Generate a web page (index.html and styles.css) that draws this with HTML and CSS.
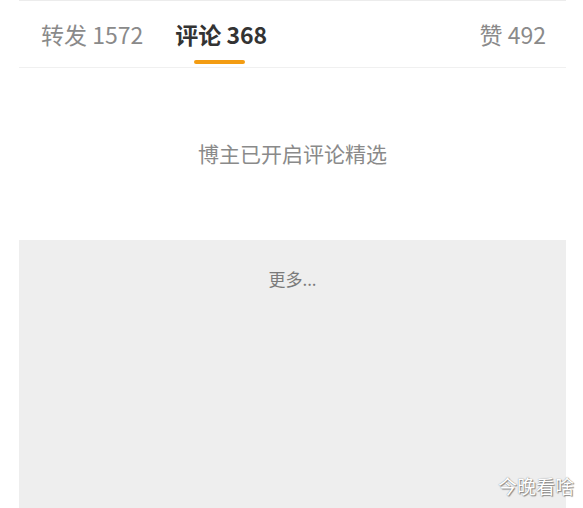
FILE: index.html
```html
<!DOCTYPE html>
<html>
<head>
  <link rel="stylesheet" href="styles.css">
</head>
<body>
  <div class="page">
    <div class="top-line"></div>
    <div class="tabs">
      <div class="tab">转发 1572</div>
      <div class="tab active">评论 368</div>
      <div class="tab like">赞 492</div>
    </div>
    <div class="notice">博主已开启评论精选</div>
    <div class="more-box">
      <div class="more">更多...</div>
    </div>
  </div>
  <div class="watermark">今晚看啥</div>
</body>
</html>
```

FILE: styles.css
```css
body {
  margin: 0;
  width: 583px;
  height: 508px;
  overflow: hidden;
  background: #fff;
  font-family: "Noto Sans CJK SC", "Noto Sans", sans-serif;
  position: relative;
}
.page {
  padding: 0 17px 0 19px;
}
.top-line {
  height: 1px;
  background: #ececec;
}
.tabs {
  display: flex;
  height: 66px;
  border-bottom: 1px solid #f0f0f0;
  padding-left: 22px;
}
.tab {
  position: relative;
  font-size: 23px;
  line-height: 66px;
  height: 66px;
  color: #8a8a8a;
  margin-right: 32px;
}
.tab.active {
  color: #333;
  font-weight: bold;
}
.tab.active:after {
  content: "";
  position: absolute;
  left: 19px;
  width: 51px;
  bottom: 3px;
  height: 4px;
  border-radius: 2px;
  background: #f39c12;
}
.tab.like {
  margin-left: auto;
  margin-right: 20px;
}
.notice {
  height: 172px;
  line-height: 170px;
  text-align: center;
  font-size: 21px;
  color: #8a8a8a;
}
.more-box {
  background: #eeeeee;
  height: 268px;
}
.more {
  text-align: center;
  padding-top: 26px;
  font-size: 17px;
  color: #7a7a7a;
}
.watermark {
  position: absolute;
  right: 9px;
  bottom: 9px;
  font-size: 19px;
  color: #fff;
  text-shadow: 0 0 1px #777, 1px 1px 1px #888;
}
```
